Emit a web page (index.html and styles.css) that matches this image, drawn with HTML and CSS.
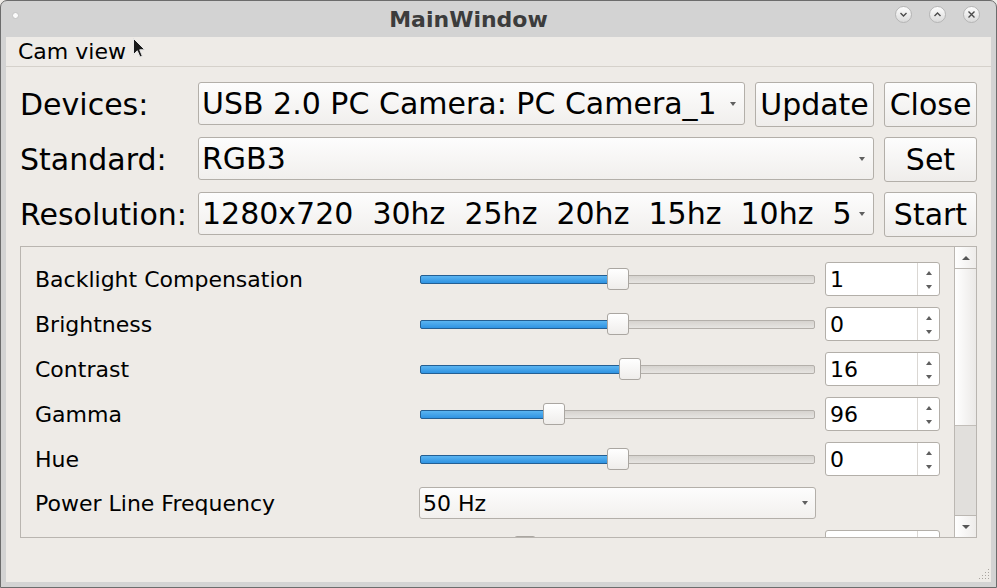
FILE: index.html
```html
<!DOCTYPE html>
<html>
<head>
<meta charset="utf-8">
<title>MainWindow</title>
<link rel="stylesheet" href="styles.css">
</head>
<body>
<div class="window">
  <div class="titlebar">
    <span class="menu-dot"></span>
    <span class="title">MainWindow</span>
    <div class="wbtns">
      <span class="wbtn"><svg width="9" height="9" viewBox="0 0 9 9"><path d="M1.5 3 L4.5 6 L7.5 3" fill="none" stroke="#4a4a4a" stroke-width="1.4"/></svg></span>
      <span class="wbtn"><svg width="9" height="9" viewBox="0 0 9 9"><path d="M1.5 6 L4.5 3 L7.5 6" fill="none" stroke="#4a4a4a" stroke-width="1.4"/></svg></span>
      <span class="wbtn"><svg width="9" height="9" viewBox="0 0 9 9"><path d="M1.5 1.5 L7.5 7.5 M7.5 1.5 L1.5 7.5" fill="none" stroke="#4a4a4a" stroke-width="1.4"/></svg></span>
    </div>
  </div>
  <div class="client">
    <div class="menubar"><span class="menu-item">Cam view</span></div>
    <div class="main">
      <div class="controls">
        <span class="lbl">Devices:</span>
        <div class="combo"><span class="combo-text">USB 2.0 PC Camera: PC Camera_1</span><span class="combo-arrow"><i class="tri-down"></i></span></div>
        <button class="btn">Update</button>
        <button class="btn">Close</button>

        <span class="lbl">Standard:</span>
        <div class="combo span2"><span class="combo-text">RGB3</span><span class="combo-arrow"><i class="tri-down"></i></span></div>
        <button class="btn">Set</button>

        <span class="lbl">Resolution:</span>
        <div class="combo span2"><span class="combo-text">1280x720  30hz  25hz  20hz  15hz  10hz  5hz</span><span class="combo-arrow"><i class="tri-down"></i></span></div>
        <button class="btn">Start</button>
      </div>

      <div class="scrollarea">
        <div class="viewport">
          <div class="props">
            <span class="plbl">Backlight Compensation</span>
            <div class="slider"><div class="track" style="--p:0.5013"><span class="fill"></span><span class="knob"></span></div></div>
            <div class="spin"><span class="spin-val">1</span><span class="spin-btns"><i class="tri-up"></i><i class="tri-down"></i></span></div>

            <span class="plbl">Brightness</span>
            <div class="slider"><div class="track" style="--p:0.5013"><span class="fill"></span><span class="knob"></span></div></div>
            <div class="spin"><span class="spin-val">0</span><span class="spin-btns"><i class="tri-up"></i><i class="tri-down"></i></span></div>

            <span class="plbl">Contrast</span>
            <div class="slider"><div class="track" style="--p:0.5337"><span class="fill"></span><span class="knob"></span></div></div>
            <div class="spin"><span class="spin-val">16</span><span class="spin-btns"><i class="tri-up"></i><i class="tri-down"></i></span></div>

            <span class="plbl">Gamma</span>
            <div class="slider"><div class="track" style="--p:0.3288"><span class="fill"></span><span class="knob"></span></div></div>
            <div class="spin"><span class="spin-val">96</span><span class="spin-btns"><i class="tri-up"></i><i class="tri-down"></i></span></div>

            <span class="plbl">Hue</span>
            <div class="slider"><div class="track" style="--p:0.5013"><span class="fill"></span><span class="knob"></span></div></div>
            <div class="spin"><span class="spin-val">0</span><span class="spin-btns"><i class="tri-up"></i><i class="tri-down"></i></span></div>

            <span class="plbl">Power Line Frequency</span>
            <div class="combo small"><span class="combo-text">50 Hz</span><span class="combo-arrow"><i class="tri-down"></i></span></div>
            <span class="empty"></span>

            <span class="plbl">Saturation</span>
            <div class="slider"><div class="track" style="--p:0.25"><span class="fill"></span><span class="knob"></span></div></div>
            <div class="spin"><span class="spin-val">64</span><span class="spin-btns"><i class="tri-up"></i><i class="tri-down"></i></span></div>
          </div>
        </div>
        <div class="vscroll">
          <span class="sb-btn up"><i class="sb-up"></i></span>
          <span class="sb-handle"></span>
          <span class="sb-groove"></span>
          <span class="sb-btn down"><i class="sb-down"></i></span>
        </div>
      </div>
    </div>
    <svg class="grip" width="12" height="12" viewBox="0 0 12 12">
      <g fill="#a9a5a0">
        <rect x="10" y="0" width="1" height="1"/>
        <rect x="7" y="3" width="1" height="1"/><rect x="10" y="3" width="1" height="1"/>
        <rect x="4" y="6" width="1" height="1"/><rect x="7" y="6" width="1" height="1"/><rect x="10" y="6" width="1" height="1"/>
        <rect x="1" y="9" width="1" height="1"/><rect x="4" y="9" width="1" height="1"/><rect x="7" y="9" width="1" height="1"/><rect x="10" y="9" width="1" height="1"/>
      </g>
    </svg>
  </div>
  <svg class="cursor" width="14" height="21" viewBox="0 0 14 21">
    <path d="M0.5 0.5 L0.5 16.5 L4.3 12.8 L7 19 L9.3 18 L6.7 11.8 L11.8 11.8 Z" fill="#1a1a1a" stroke="#e8e8e8" stroke-width="1" stroke-linejoin="round"/>
  </svg>
</div>
</body>
</html>
```

FILE: styles.css
```css
* {
  box-sizing: border-box;
  margin: 0;
  padding: 0;
}

html, body {
  width: 997px;
  height: 588px;
  overflow: hidden;
}

body {
  font-family: "DejaVu Sans", "Liberation Sans", sans-serif;
  color: #000;
  background: #eeebe7;
}

.window {
  position: relative;
  width: 997px;
  height: 588px;
  border: 1px solid #6c6c6c;
  border-radius: 7px 7px 0 0;
  background: #d3d3d3;
  display: flex;
  flex-direction: column;
}

/* ---------- title bar ---------- */
.titlebar {
  height: 36px;
  flex: none;
  display: flex;
  align-items: center;
}

.menu-dot {
  width: 7px;
  height: 7px;
  border-radius: 50%;
  background: #fbfbfb;
  border: 1px solid #c2c2c2;
  margin-left: 11px;
  margin-top: -8px;
}

.title {
  flex: 1;
  text-align: center;
  padding-left: 23px;
  font-weight: bold;
  font-size: 22px;
  color: #3c3c3c;
}

.wbtns {
  display: flex;
  gap: 17px;
  margin-right: 16px;
  margin-top: -9px;
}

.wbtn {
  width: 17px;
  height: 17px;
  border-radius: 50%;
  border: 1px solid #b5b5b5;
  background: linear-gradient(#fdfdfd, #dadada);
  display: flex;
  align-items: center;
  justify-content: center;
}

.wbtn svg {
  display: block;
}

/* ---------- client ---------- */
.client {
  flex: 1;
  margin: 0 5px 5px;
  background: #eeebe7;
  display: flex;
  flex-direction: column;
  position: relative;
}

.menubar {
  height: 30px;
  flex: none;
  border-bottom: 1px solid #d5d1cb;
  padding-left: 12px;
  font-size: 22px;
  line-height: 29px;
}

.main {
  padding: 15px 14px 0;
}

.controls {
  display: grid;
  grid-template-columns: 168px 547px 119px 93px;
  column-gap: 10px;
  row-gap: 11px;
  grid-auto-rows: 44px;
}

.lbl {
  font-size: 30px;
  display: flex;
  align-items: center;
  margin-left: 0;
  white-space: nowrap;
}

.combo {
  display: flex;
  align-items: center;
  border: 1px solid #b3afa9;
  border-radius: 3px;
  background: linear-gradient(#fdfdfd, #f1efed);
  font-size: 30px;
  height: 43px;
  overflow: hidden;
}

.combo.span2 {
  grid-column: span 2;
}

.combo-text {
  flex: 1;
  padding-left: 3px;
  white-space: pre;
  overflow: hidden;
}

.combo-arrow {
  flex: none;
  width: 22px;
  display: flex;
  justify-content: center;
  align-items: center;
}

.tri-down {
  display: block;
  width: 0;
  height: 0;
  border-left: 3.5px solid transparent;
  border-right: 3.5px solid transparent;
  border-top: 4px solid #5f5f5f;
}

.tri-up {
  display: block;
  width: 0;
  height: 0;
  border-left: 3.5px solid transparent;
  border-right: 3.5px solid transparent;
  border-bottom: 4px solid #5f5f5f;
}

.btn {
  font-family: inherit;
  font-size: 30px;
  color: #000;
  border: 1px solid #b3afa9;
  border-radius: 3px;
  background: linear-gradient(#fdfdfd, #efedeb);
  height: 45px;
}

/* ---------- scroll area ---------- */
.scrollarea {
  margin-top: 10px;
  height: 292px;
  border: 1px solid #b9b5b0;
  display: flex;
}

.viewport {
  flex: 1;
  overflow: hidden;
}

.props {
  display: grid;
  grid-template-columns: 1fr 397px 115px;
  column-gap: 9px;
  row-gap: 11px;
  padding: 15px 14px 0 14px;
  align-items: center;
}

.plbl {
  font-size: 22px;
  white-space: nowrap;
}

.slider {
  height: 34px;
  display: flex;
  align-items: center;
  padding: 0 1px;
}

.track {
  position: relative;
  flex: 1;
  height: 9px;
  border: 1px solid #b3afaa;
  border-radius: 2px;
  background: linear-gradient(#d6d3cf, #e6e4e1);
}

.fill {
  position: absolute;
  left: -1px;
  top: -1px;
  height: 9px;
  width: calc(var(--p) * (100% - 22px) + 12px);
  border: 1px solid #245f93;
  border-radius: 2px;
  background: linear-gradient(#5ab4f1, #2f93e2);
}

.knob {
  position: absolute;
  top: -8px;
  left: calc(var(--p) * (100% - 22px));
  width: 22px;
  height: 22px;
  border: 1px solid #aaa6a1;
  border-radius: 3px;
  background: linear-gradient(#ffffff, #efedeb);
}

.combo.small {
  height: 32px;
  font-size: 22px;
  background: linear-gradient(#fdfdfd, #f2f0ee);
}

.combo.small .combo-text {
  padding-left: 3px;
}

.combo.small .combo-arrow {
  width: 20px;
}

.spin {
  height: 34px;
  display: flex;
  background: #fff;
  border: 1px solid #b3afa9;
  border-radius: 3px;
}

.spin-val {
  flex: 1;
  padding-left: 4px;
  font-size: 22px;
  display: flex;
  align-items: center;
}

.spin-btns {
  width: 22px;
  border-left: 1px solid #dad7d3;
  display: flex;
  flex-direction: column;
  align-items: center;
}

.spin-btns .tri-up {
  margin-top: 8px;
}

.spin-btns .tri-down {
  margin-top: 10px;
}

/* ---------- scrollbar ---------- */
.vscroll {
  width: 22px;
  flex: none;
  border-left: 1px solid #bbb7b2;
  display: flex;
  flex-direction: column;
}

.sb-btn {
  height: 22px;
  flex: none;
  display: flex;
  align-items: center;
  justify-content: center;
  background: linear-gradient(90deg, #ffffff, #eeecea);
}

.sb-btn.up {
  border-bottom: 1px solid #bbb7b2;
}

.sb-btn.down {
  border-top: 1px solid #bbb7b2;
  height: 22px;
}

.sb-up {
  display: block;
  border-left: 4px solid transparent;
  border-right: 4px solid transparent;
  border-bottom: 4px solid #555;
}

.sb-down {
  display: block;
  border-left: 4px solid transparent;
  border-right: 4px solid transparent;
  border-top: 4px solid #555;
}

.sb-handle {
  height: 157px;
  flex: none;
  border-bottom: 1px solid #c2beb9;
  background: linear-gradient(90deg, #ffffff, #ebe9e7);
}

.sb-groove {
  flex: 1;
  background: #e1dfdc;
}

.grip {
  position: absolute;
  right: 1px;
  bottom: 1px;
}

.cursor {
  position: absolute;
  left: 132px;
  top: 37px;
}
```
